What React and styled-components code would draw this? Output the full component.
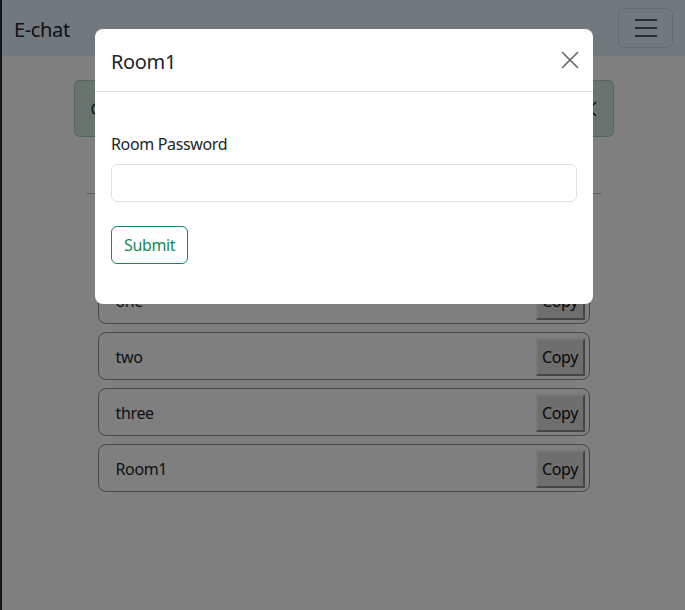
import styled, { createGlobalStyle } from 'styled-components';

const GlobalStyle = createGlobalStyle`
    * { box-sizing: border-box; }
    html, body { margin: 0; height: 100%; }
    body {
        font-family: 'Noto Sans', 'Open Sans', sans-serif;
        font-size: 16px;
        line-height: 1.5;
        letter-spacing: -0.35px;
        color: #212529;
        background: #fff;
        border-left: 2px solid #2a2a2a;
        min-height: 610px;
    }
`;

const Navbar = styled.nav`
    height: 56px;
    background: #e3f2fd;
    display: flex;
    align-items: center;
    justify-content: space-between;
    padding: 0 12px;
`;

const Brand = styled.span`
    font-size: 20px;
    line-height: 30px;
    padding-top: 3px;
`;

const Toggler = styled.button`
    width: 55px;
    height: 40px;
    border: 1px solid rgba(0, 0, 0, 0.1);
    border-radius: 6px;
    background: transparent;
    display: flex;
    align-items: center;
    justify-content: center;
    padding: 0;
`;

const Container = styled.main`
    width: 540px;
    margin: 24px auto 0;
`;

const Alert = styled.div`
    height: 57px;
    background: #d1e7dd;
    border: 1px solid #a3cfbb;
    border-radius: 6px;
    color: #0a3622;
    display: flex;
    align-items: center;
    justify-content: space-between;
    padding: 0 16px;
`;

const Rule = styled.hr`
    margin: 56px 12px 0;
    border: 0;
    border-top: 1px solid rgba(0, 0, 0, 0.25);
`;

const RoomList = styled.ul`
    list-style: none;
    margin: 82px 24px 0;
    padding: 0;
    display: flex;
    flex-direction: column;
    gap: 8px;
`;

const RoomItem = styled.li`
    height: 48px;
    border: 1px solid #8a8e94;
    border-radius: 8px;
    display: flex;
    align-items: center;
    justify-content: space-between;
    padding: 1px 4px 0 17px;
`;

const CopyButton = styled.button`
    font-family: inherit;
    font-size: 16px;
    letter-spacing: inherit;
    height: 38px;
    width: 49px;
    padding: 0;
    color: #111;
    background: #dcdcdc;
    border: 2px solid;
    border-color: #eeeeee #8a8a8a #8a8a8a #eeeeee;
`;

const Backdrop = styled.div`
    position: fixed;
    inset: 0;
    background: rgba(0, 0, 0, 0.5);
`;

const Modal = styled.div`
    position: fixed;
    top: 29px;
    left: 95px;
    width: 498px;
    background: #fff;
    border-radius: 8px;
    overflow: hidden;
`;

const ModalHeader = styled.div`
    height: 63px;
    padding: 3px 16px 0;
    border-bottom: 1px solid #dee2e6;
    display: flex;
    align-items: center;
    justify-content: space-between;
`;

const ModalTitle = styled.h5`
    margin: 0;
    font-size: 20px;
    font-weight: 400;
    line-height: 30px;
`;

const CloseButton = styled.button`
    border: 0;
    background: transparent;
    padding: 0;
    width: 18px;
    height: 18px;
    margin: 0 -2px 3px 0;
    display: flex;
    align-items: center;
    justify-content: center;
`;

const ModalBody = styled.div`
    padding: 40px 16px 40px;
`;

const Label = styled.label`
    display: block;
    margin-bottom: 8px;
`;

const Input = styled.input`
    display: block;
    width: 100%;
    height: 38px;
    border: 1px solid #dee2e6;
    border-radius: 6px;
    margin-bottom: 24px;
`;

const OutlineButton = styled.button`
    font-family: inherit;
    font-size: 16px;
    letter-spacing: inherit;
    height: 38px;
    padding: 0 12px;
    color: #198754;
    background: transparent;
    border: 1px solid #198754;
    border-radius: 6px;
`;

const XIcon = ({ size, color, width = 1.6 }) => (
    <svg width={size} height={size} viewBox="0 0 16 16">
        <path d="M1 1L15 15M15 1L1 15" stroke={color} strokeWidth={width} />
    </svg>
);

const rooms = ['one', 'two', 'three', 'Room1'];

export default function App() {
    return (
        <>
            <GlobalStyle />
            <Navbar>
                <Brand>E-chat</Brand>
                <Toggler>
                    <svg width="30" height="30" viewBox="0 0 30 30">
                        <path d="M4 7h22M4 15h22M4 23h22" stroke="rgba(33,37,41,.75)" strokeWidth="2" />
                    </svg>
                </Toggler>
            </Navbar>
            <Container>
                <Alert>
                    <span>Copied room link to clipboard</span>
                    <XIcon size={16} color="#0a3622" />
                </Alert>
                <Rule />
                <RoomList>
                    {rooms.map((room) => (
                        <RoomItem key={room}>
                            <span>{room}</span>
                            <CopyButton>Copy</CopyButton>
                        </RoomItem>
                    ))}
                </RoomList>
            </Container>
            <Backdrop />
            <Modal>
                <ModalHeader>
                    <ModalTitle>Room1</ModalTitle>
                    <CloseButton>
                        <XIcon size={18} color="#6b6b6b" width={1.3} />
                    </CloseButton>
                </ModalHeader>
                <ModalBody>
                    <Label>Room Password</Label>
                    <Input type="password" />
                    <OutlineButton>Submit</OutlineButton>
                </ModalBody>
            </Modal>
        </>
    );
}
